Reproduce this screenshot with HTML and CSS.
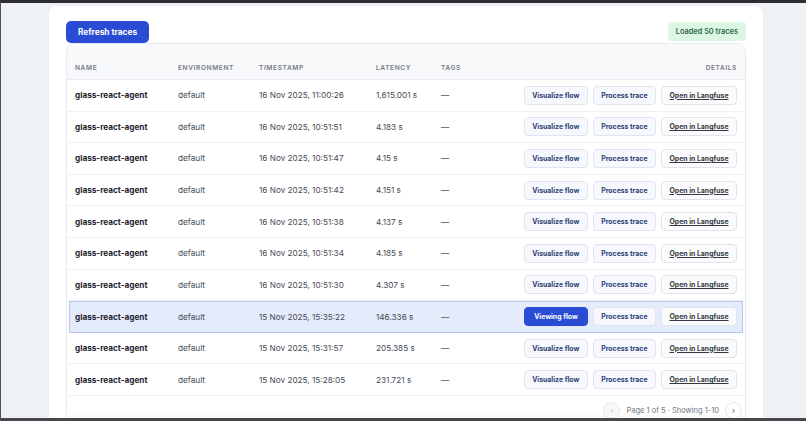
FILE: index.html
```html
<!DOCTYPE html>
<html lang="en">
<head>
    <meta charset="UTF-8">
    <meta name="viewport" content="width=device-width, initial-scale=1.0">
    <title>Traces</title>
    <link rel="stylesheet" href="styles.css">
</head>
<body>

<div class="card">
    <!-- toolbar -->
    <div class="toolbar">
        <button class="btn-refresh">Refresh traces</button>
        <span class="status">Loaded 50 traces</span>
    </div>

    <!-- traces table -->
    <div class="table">
        <div class="row head">
            <div>Name</div>
            <div>Environment</div>
            <div>Timestamp</div>
            <div>Latency</div>
            <div>Tags</div>
            <div class="details">Details</div>
        </div>

        <div class="row">
            <div class="name">glass-react-agent</div>
            <div>default</div>
            <div>16 Nov 2025, 11:00:26</div>
            <div>1,615.001 s</div>
            <div class="tags">—</div>
            <div class="actions"><button class="act">Visualize flow</button><button class="act">Process trace</button><a class="act link">Open in Langfuse</a></div>
        </div>
        <div class="row">
            <div class="name">glass-react-agent</div>
            <div>default</div>
            <div>16 Nov 2025, 10:51:51</div>
            <div>4.183 s</div>
            <div class="tags">—</div>
            <div class="actions"><button class="act">Visualize flow</button><button class="act">Process trace</button><a class="act link">Open in Langfuse</a></div>
        </div>
        <div class="row">
            <div class="name">glass-react-agent</div>
            <div>default</div>
            <div>16 Nov 2025, 10:51:47</div>
            <div>4.15 s</div>
            <div class="tags">—</div>
            <div class="actions"><button class="act">Visualize flow</button><button class="act">Process trace</button><a class="act link">Open in Langfuse</a></div>
        </div>
        <div class="row">
            <div class="name">glass-react-agent</div>
            <div>default</div>
            <div>16 Nov 2025, 10:51:42</div>
            <div>4.151 s</div>
            <div class="tags">—</div>
            <div class="actions"><button class="act">Visualize flow</button><button class="act">Process trace</button><a class="act link">Open in Langfuse</a></div>
        </div>
        <div class="row">
            <div class="name">glass-react-agent</div>
            <div>default</div>
            <div>16 Nov 2025, 10:51:38</div>
            <div>4.137 s</div>
            <div class="tags">—</div>
            <div class="actions"><button class="act">Visualize flow</button><button class="act">Process trace</button><a class="act link">Open in Langfuse</a></div>
        </div>
        <div class="row">
            <div class="name">glass-react-agent</div>
            <div>default</div>
            <div>16 Nov 2025, 10:51:34</div>
            <div>4.185 s</div>
            <div class="tags">—</div>
            <div class="actions"><button class="act">Visualize flow</button><button class="act">Process trace</button><a class="act link">Open in Langfuse</a></div>
        </div>
        <div class="row">
            <div class="name">glass-react-agent</div>
            <div>default</div>
            <div>16 Nov 2025, 10:51:30</div>
            <div>4.307 s</div>
            <div class="tags">—</div>
            <div class="actions"><button class="act">Visualize flow</button><button class="act">Process trace</button><a class="act link">Open in Langfuse</a></div>
        </div>
        <div class="row selected">
            <div class="name">glass-react-agent</div>
            <div>default</div>
            <div>15 Nov 2025, 15:35:22</div>
            <div>146.336 s</div>
            <div class="tags">—</div>
            <div class="actions"><button class="act active">Viewing flow</button><button class="act">Process trace</button><a class="act link">Open in Langfuse</a></div>
        </div>
        <div class="row">
            <div class="name">glass-react-agent</div>
            <div>default</div>
            <div>15 Nov 2025, 15:31:57</div>
            <div>205.385 s</div>
            <div class="tags">—</div>
            <div class="actions"><button class="act">Visualize flow</button><button class="act">Process trace</button><a class="act link">Open in Langfuse</a></div>
        </div>
        <div class="row">
            <div class="name">glass-react-agent</div>
            <div>default</div>
            <div>15 Nov 2025, 15:28:05</div>
            <div>231.721 s</div>
            <div class="tags">—</div>
            <div class="actions"><button class="act">Visualize flow</button><button class="act">Process trace</button><a class="act link">Open in Langfuse</a></div>
        </div>

        <!-- pagination -->
        <div class="pager">
            <span class="page-btn disabled">‹</span>
            <span class="page-info">Page 1 of 5 · Showing 1-10</span>
            <span class="page-btn">›</span>
        </div>
    </div>
</div>

</body>
</html>
```

FILE: styles.css
```css
html, body {
    margin: 0;
    padding: 0;
}

body {
    height: 100vh;
    box-sizing: border-box;
    overflow: hidden;
    background: #eef1f6;
    border-top: 3px solid #2e2e30;
    border-left: 1px solid #55555a;
    border-bottom: 3px solid #48484c;
    font-family: Inter, "Liberation Sans", sans-serif;
    color: #1f2430;
}

/* white card */
.card {
    margin: 3px 0 0 48px;
    width: 714px;
    box-sizing: border-box;
    background: #fff;
    border-radius: 8px;
    padding: 15px 17px 0;
    height: 500px;
}

.toolbar {
    display: flex;
    justify-content: space-between;
    align-items: flex-start;
}

.btn-refresh {
    height: 22px;
    width: 83px;
    border: none;
    border-radius: 5px;
    background: #2a4bd3;
    color: #fff;
    font-family: inherit;
    font-size: 8.3px;
    font-weight: 700;
    padding: 0;
}

.status {
    margin-top: 1px;
    height: 19px;
    line-height: 19px;
    padding: 0 8px;
    border-radius: 4px;
    background: #dcf6e4;
    color: #2f6a48;
    font-size: 7.4px;
    font-weight: 600;
}

/* table */
.table {
    border: 1px solid #e7eaf0;
    border-radius: 8px;
    background: #fff;
    overflow: hidden;
}

.row {
    display: grid;
    grid-template-columns: 103px 81px 117px 65px 1fr auto;
    align-items: center;
    height: 31.6px;
    box-sizing: border-box;
    padding: 0 8px 0 8px;
    border-bottom: 1px solid #eef0f4;
    font-size: 8.2px;
    color: #444a55;
}

.row.head {
    height: 36px;
    align-items: end;
    padding-bottom: 7px;
    background: #f8f9fb;
    border-bottom: 1px solid #e9ecf1;
    font-size: 6.6px;
    font-weight: 600;
    letter-spacing: 0.09em;
    text-transform: uppercase;
    color: #767b85;
}

.row.selected {
    margin: 0 2px;
    padding: 0 5px;
    background: #e4ebfb;
    border: 1px solid #b9c7ef;
}

.name {
    font-weight: 700;
    color: #1f2430;
}

.tags {
    color: #555b66;
}

.details {
    text-align: right;
}

.actions {
    display: flex;
    gap: 5px;
}

.act {
    height: 19px;
    box-sizing: border-box;
    padding: 0 7.5px;
    border: 1px solid #dfe4ee;
    border-radius: 4px;
    background: #f6f8fd;
    color: #2d3d76;
    font-family: inherit;
    font-size: 6.9px;
    font-weight: 700;
    display: flex;
    align-items: center;
}

.act.active {
    background: #2a4bd3;
    border-color: #2a4bd3;
    color: #fff;
    padding: 0 9px;
}

.act.link {
    background: #fbfbfc;
    color: #333842;
    text-decoration: underline;
}

/* pagination */
.pager {
    display: flex;
    justify-content: flex-end;
    align-items: flex-start;
    gap: 6px;
    padding: 6px 3px 0 0;
    height: 40px;
    box-sizing: border-box;
    background: linear-gradient(#fff 35%, #eceef1);
}

.page-btn {
    width: 15px;
    height: 15px;
    border: 1px solid #e3e6ec;
    border-radius: 50%;
    background: #fff;
    color: #555;
    font-size: 8px;
    line-height: 15px;
    text-align: center;
}

.page-btn.disabled {
    background: #f7f8fa;
    color: #c5c8cf;
}

.page-info {
    font-size: 7.5px;
    color: #707682;
    line-height: 17px;
}
```
